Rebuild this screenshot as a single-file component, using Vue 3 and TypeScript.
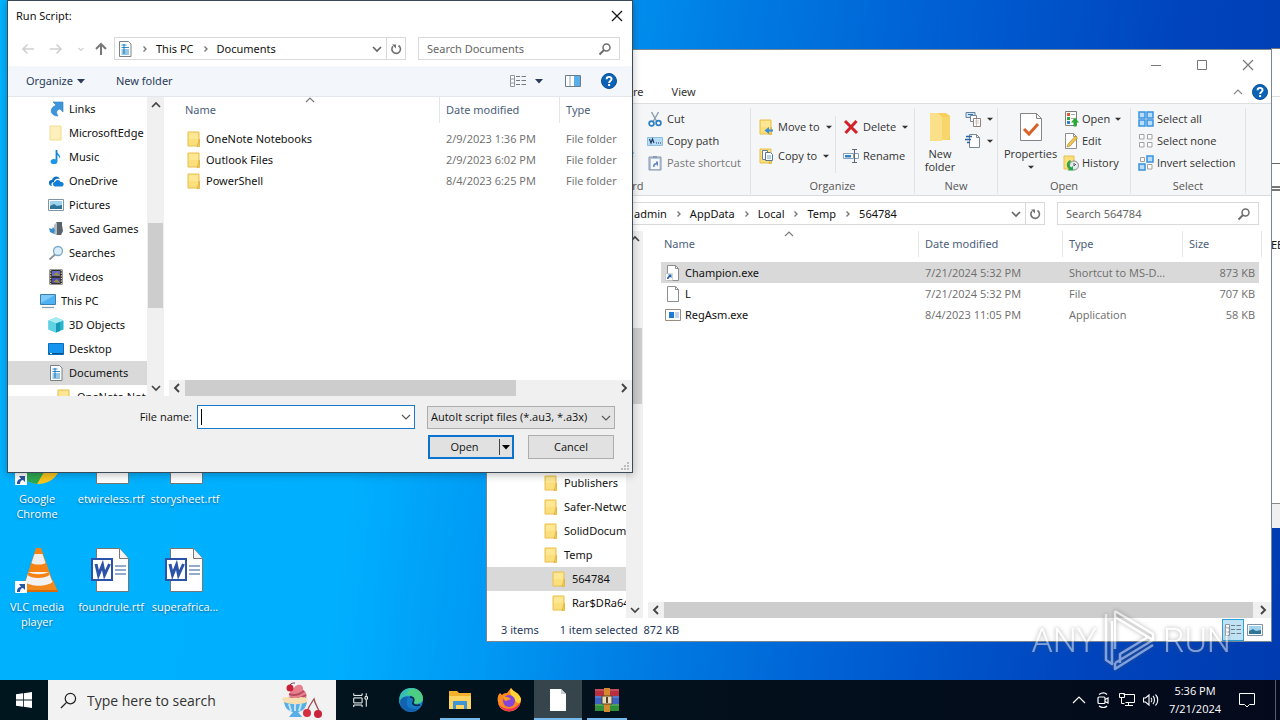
<script setup lang="ts">
import { ref } from 'vue'

interface TreeItem { label: string; icon: string; level?: number; selected?: boolean }
interface FileRow { name: string; icon: string; date: string; type: string; size?: string; selected?: boolean }

const folder = '<path d="M2 1h11v14H2z" fill="#fbdf7c" stroke="#e8bf4c"/><path d="M3 2h9v6H3z" fill="#fde793"/><path d="M13.500 8v7.500H11z" fill="#f5cd57" stroke="#e0b23e" stroke-width=".8"/>'
const help = '<circle cx="8" cy="8" r="7.500" fill="#0b63b8" stroke="#0a4f98"/><path d="M5.600 6.200C5.600 3.200 10.600 3.100 10.600 6 10.600 7.800 8.100 8 8.100 9.900" fill="none" stroke="#fff" stroke-width="1.900"/><path d="M7.100 11h2v2h-2z" fill="#fff"/>'
const page = '<path d="M2.500.5h8l3 3v12h-11z" fill="#fff" stroke="#8e8e8e"/><path d="M10.500.5v3h3" fill="none" stroke="#8e8e8e"/>'
const docs = '<path d="M2.500.5h9l2.500 2.500v12.500H2.500z" fill="#fff" stroke="#7a8288"/><path d="M4.500 4h5M4.500 6.500h7.500M4.500 9h7.500M4.500 11h7.500M4.500 13h7.500" stroke="#2f8fd0" stroke-width="1.200"/><path d="M7 3v10" stroke="#1976b5"/>'

const icons: Record<string, string> = {
  folder,
  help,
  page,
  docs,
  folderPale: '<path d="M2 1h11v14H2z" fill="#fdf0bb" stroke="#f2dc96"/><path d="M13.500 8.500v7H10z" fill="#fae6a2"/>',
  links: '<path d="M5 1h10v10l-3-3c-4 1-4 4-2 7-6 0-9-5-5-9l3-2z" fill="#3d95dc" stroke="#2b7fc4" stroke-width=".6"/>',
  music: '<path d="M8 1c1 4 5 4 4 9-1-3-2-3.500-3-4v6" fill="#1b96ea"/><path d="M8.500 1v11" stroke="#1484d6" stroke-width="1.800"/><ellipse cx="6" cy="12.500" rx="3.400" ry="2.600" fill="#1b96ea"/>',
  onedrive: '<path d="M1 10c0-3 2-3 3-3 1-4 6-5 8-1-5-1-6 2-6 3-3 0-3 3-2 4-2 0-3-1-3-3z" fill="#0b6fc2"/><path d="M5 11c0-2 2-2 2-2 1-3 5-2.500 5.500 0 4-1 4 4.500 1 4.500H7c-1 0-2-1-2-2.500z" fill="#1180d8"/>',
  pictures: '<path d="M.5 2.500h15v11H.5z" fill="#fff" stroke="#7e93a3"/><path d="M2 4h12v8H2z" fill="#9fd2ee"/><path d="M2 9l4-2 3 2 5-1v4H2z" fill="#2f7597"/>',
  games: '<path d="M8 1h6v3l1 6-2 4H8z" fill="#59636b"/><path d="M6 4l3-3v13l-3-1z" fill="#b2bcc2"/><path d="M1 7l3 1 1-2 2 3-1 4-4-2z" fill="#3a8fd4"/>',
  search: '<circle cx="10" cy="6" r="4.500" fill="#d9eefa" stroke="#7ba8c4" stroke-width="1.300"/><path d="M7 9.500L1.500 14.500" stroke="#8b9296" stroke-width="1.800"/>',
  videos: '<path d="M1.500.5h13v15h-13z" fill="#333"/><path d="M4 2h8v5H4z" fill="#6366c4"/><path d="M4 9h8v5H4z" fill="#4b4cae"/><path d="M5 6l4-3 3 4M5 13l4-3 3 4" fill="#9c9140"/><path d="M2.700 1v14M13.300 1v14" stroke="#f3efc0" stroke-dasharray="1.300 1.300"/>',
  pc: '<path d="M.5 1.500h15v10H.5z" fill="#4fb0f2" stroke="#3f7fae"/><path d="M1 2h14L1 10z" fill="#7ecbfb"/><path d="M2 14.500h12" stroke="#8b9aa6" stroke-width="1.200"/>',
  cube: '<path d="M8 .5l7.500 3v9L8 15.500.5 12.500v-9z" fill="#28b6cf"/><path d="M8 .5l7.500 3L8 6.500.5 3.500z" fill="#a5ecf4"/><path d="M8 6.500v9L.5 12.500v-9z" fill="#5fd3e4"/><path d="M8 6.500l4-1.500v9l-4 1.500z" fill="#169ab4"/>',
  desktop: '<path d="M.5 2.500h15v11H.5z" fill="#1595f0" stroke="#0d6cb8"/><path d="M1 12.500h14" stroke="#0c4f8d"/><path d="M2 12.500h2" stroke="#fff"/>',
  shortcut: page + '<path d="M.5 8.500h7v7h-7z" fill="#fff" stroke="#bbb" stroke-width=".6"/><path d="M2 14c0-2 1-3 2-3l-1-1.500h3.500V13L5.300 12C4 12.500 4 13 3.500 14z" fill="#2660b0"/>',
  app: '<path d="M.5 2.500h15v11H.5z" fill="#fff" stroke="#9c8c80"/><path d="M4 5h5v6H4z" fill="#1d7cd0"/><path d="M10 6h4M10 8h4M10 10h4" stroke="#84aed4"/>',
  cut: '<path d="M4.500 1l5 9M11.500 1l-5 9" stroke="#8fa0ae" stroke-width="1.500"/><circle cx="4.500" cy="12.500" r="2.400" fill="none" stroke="#2d7fc1" stroke-width="1.700"/><circle cx="11.500" cy="12" r="2.400" fill="none" stroke="#2d7fc1" stroke-width="1.700"/>',
  copypath: '<path d="M.5 4.500h15v8H.5z" fill="#b6dcf8" stroke="#8bbfe5"/><path d="M2.500 6l1.500 4 1.500-4 1.500 4M9 10h1M11 10h1M13 10h1" fill="none" stroke="#233c63" stroke-width="1.200"/>',
  pasteshort: '<path d="M2 2h12v13H2z" fill="#b8c6da" stroke="#8496b4"/><path d="M4 4h8.500v10H4z" fill="#f4f7fb"/><path d="M6 1h4v2H6z" fill="#8b9ab0"/><path d="M6 12c0-3 1-4 3-4V6.500h-2 4v5l-1.500-2C8 9.500 7.500 11 7.500 12z" fill="#6586bd"/>',
  moveto: folder + '<path d="M15 10.500h-4V8L6.500 11.500 11 15v-2.500h4z" fill="#3a8fd6"/>',
  copyto: folder + '<path d="M4.500 2.500h5v9h-5z" fill="#fff" stroke="#6b8299"/><path d="M7.500 4.500h5l2 2v6h-7z" fill="#fff" stroke="#5b7890"/><path d="M9 8h4M9 10h4" stroke="#6fa6d8"/>',
  delete: '<path d="M2 2l12 12M13.500 2L2.500 14" stroke="#d3222a" stroke-width="3"/>',
  rename: '<path d="M.5 5.500h10v5H.5zM11 5.500h4.500v5H11" fill="#fff" stroke="#8aa1b5"/><path d="M2 7h6v2.500H2z" fill="#2d80cb"/><path d="M9 1.500h5M11.500 1.500v13M9 14.500h5" stroke="#5c6a78" fill="none"/>',
  newitem: '<path d="M1 1.500h9v5H1z" fill="#cfe4f6" stroke="#64839e"/><path d="M3 3.500h5" stroke="#2c74b4"/><path d="M5.500 4.500h6v6h-6z" fill="#fff" stroke="#7a8794"/><path d="M8.500 7.500h7v8h-7z" fill="#fff" stroke="#8f8280"/><path d="M10 10h4M10 12h4M11.500 8v7" stroke="#c8b9b4" stroke-width=".8"/>',
  easy: '<path d="M4.500 1.500h7l3 3v10h-10z" fill="#fff" stroke="#7a8794"/><path d="M11.500 1.500v3h3" fill="none" stroke="#7a8794"/><path d="M1 3.500h6M0 6.500h6M2 9.500h3" stroke="#2c62a6" stroke-width="1.300"/>',
  open: '<path d="M2.500.5h11v14h-11z" fill="#fff" stroke="#7d7d7d"/><path d="M4 2h3v3H4z" fill="#dd5a30"/><path d="M4 6h3v3H4z" fill="#35a03c"/><path d="M4 10h3v3H4z" fill="#2f82cd"/><path d="M8 3.500h4M8 7.500h3" stroke="#aaa"/><path d="M12 6.500l4 5h-2.500v4h-3v-4H8z" fill="#27ab35"/>',
  edit: page + '<path d="M4 14l1-3 7.500-8 2 2L7 13z" fill="#f2c552" stroke="#a67f2a" stroke-width=".6"/>',
  history: '<path d="M1 1h10v13H1z" fill="#fbdf7c" stroke="#e8bf4c"/><circle cx="11" cy="10.500" r="4.500" fill="#e7eaec" stroke="#838b90"/><path d="M11 8v3l2-2" fill="none" stroke="#555"/><path d="M7 5C3 7 3 12 6 14l-1.500 1.500H10V11l-2 1.500C6 11 6 8 8 6z" fill="#28a545"/>',
  selall: '<path d="M1 1h6v6H1zM9 1h6v6H9zM1 9h6v6H1zM9 9h6v6H9z" fill="#b9defa" stroke="#3793df" stroke-width="1.500"/>',
  selnone: '<path d="M1.500 1.500h4.500v4.500H1.500zM9.500 1.500h4.500v4.500H9.500zM1.500 9.500h4.500v4.500H1.500zM9.500 9.500h4.500v4.500H9.500z" fill="#fff" stroke="#a2a2a2"/>',
  selinv: '<path d="M2.500 2.500h4v4h-4zM9.500 9.500h4.500v4.500H9.500z" fill="#fff" stroke="#a2a2a2"/><path d="M9 1h6v6H9zM1 9h6v6H1z" fill="#b9defa" stroke="#3793df" stroke-width="1.500"/>',
  viewlist: '<path d="M.5 2.500h4v11h-4zM.5 6h4M.5 10h4" fill="#fff" stroke="#8f979e"/><path d="M6 3.500h4M11.500 3.500H16M6 7.500h4M11.500 7.500H16M6 11.500h4M11.500 11.500H16" stroke="#707a83"/>',
  pane: '<path d="M.5 2.500h15v11H.5z" fill="#fff" stroke="#6b7d8d"/><path d="M9 3h6v10H9z" fill="#5aaeea"/><path d="M5 3v10" stroke="#9aa7b1"/>',
  left: '<path d="M14 8H3M7.500 3.500L3 8l4.500 4.500" fill="none" stroke="currentColor" stroke-width="1.600"/>',
  right: '<path d="M2 8h11M8.500 3.500L13 8l-4.500 4.500" fill="none" stroke="currentColor" stroke-width="1.600"/>',
  up: '<path d="M8 14V3M3 8l5-5 5 5" fill="none" stroke="currentColor" stroke-width="2"/>',
  chevD: '<path d="M4 6l4 4 4-4" fill="none" stroke="currentColor" stroke-width="1.700"/>',
  chevU: '<path d="M4 10l4-4 4 4" fill="none" stroke="currentColor" stroke-width="1.700"/>',
  chevL: '<path d="M10 4L6 8l4 4" fill="none" stroke="currentColor" stroke-width="1.900"/>',
  chevR: '<path d="M6 4l4 4-4 4" fill="none" stroke="currentColor" stroke-width="1.900"/>',
  crumb: '<path d="M6.500 5.500L9 8l-2.500 2.500" fill="none" stroke="#777" stroke-width="1.400"/>',
  thinU: '<path d="M4 10l4-4 4 4" fill="none" stroke="currentColor" stroke-width="1.100"/>',
  thinD: '<path d="M4 6l4 4 4-4" fill="none" stroke="currentColor" stroke-width="1.100"/>',
  tinyD: '<path d="M5.500 7L8 9.500 10.500 7" fill="none" stroke="currentColor" stroke-width="1.100"/>',
  caret: '<path d="M4 6h8l-4 4.500z" fill="currentColor"/>',
  caretS: '<path d="M4.500 6.500h7L8 10z" fill="currentColor"/>',
  refresh: '<path d="M10.500 4.500A4.300 4.300 0 1 1 5 5.200" fill="none" stroke="#707070" stroke-width="1.600"/><path d="M4 3.500h4v4z" fill="#707070"/>',
  glass: '<circle cx="9.500" cy="6.500" r="3.500" fill="none" stroke="#6d6d6d" stroke-width="1.500"/><path d="M7 9l-4.500 4.500" stroke="#6d6d6d" stroke-width="2"/>',
  close: '<path d="M3 3l10 10M13 3L3 13" stroke="currentColor" stroke-width="1.200"/>',
  min: '<path d="M3 8.500h10" stroke="currentColor"/>',
  max: '<path d="M3.500 3.500h9v9h-9z" fill="none" stroke="currentColor"/>',
  grip: '<path d="M12 6h2v2h-2zM9 9h2v2H9zM12 9h2v2h-2zM6 12h2v2H6zM9 12h2v2H9zM12 12h2v2h-2z" fill="#bdbdbd"/>',
}

const dialogTree: TreeItem[] = [
  { label: 'Links', icon: 'links' },
  { label: 'MicrosoftEdge', icon: 'folderPale' },
  { label: 'Music', icon: 'music' },
  { label: 'OneDrive', icon: 'onedrive' },
  { label: 'Pictures', icon: 'pictures' },
  { label: 'Saved Games', icon: 'games' },
  { label: 'Searches', icon: 'search' },
  { label: 'Videos', icon: 'videos' },
  { label: 'This PC', icon: 'pc', level: 0 },
  { label: '3D Objects', icon: 'cube' },
  { label: 'Desktop', icon: 'desktop' },
  { label: 'Documents', icon: 'docs', selected: true },
  { label: 'OneNote Notebooks', icon: 'folder', level: 2 },
]
const explorerTree: TreeItem[] = [
  { label: 'Publishers', icon: 'folder' },
  { label: 'Safer-Networking', icon: 'folder' },
  { label: 'SolidDocuments', icon: 'folder' },
  { label: 'Temp', icon: 'folder' },
  { label: '564784', icon: 'folder', level: 2, selected: true },
  { label: 'Rar$DRa6432', icon: 'folder', level: 2 },
]
const dialogFiles: FileRow[] = [
  { name: 'OneNote Notebooks', icon: 'folder', date: '2/9/2023 1:36 PM', type: 'File folder' },
  { name: 'Outlook Files', icon: 'folder', date: '2/9/2023 6:02 PM', type: 'File folder' },
  { name: 'PowerShell', icon: 'folder', date: '8/4/2023 6:25 PM', type: 'File folder' },
]
const explorerFiles: FileRow[] = [
  { name: 'Champion.exe', icon: 'shortcut', date: '7/21/2024 5:32 PM', type: 'Shortcut to MS-D...', size: '873 KB', selected: true },
  { name: 'L', icon: 'page', date: '7/21/2024 5:32 PM', type: 'File', size: '707 KB' },
  { name: 'RegAsm.exe', icon: 'app', date: '8/4/2023 11:05 PM', type: 'Application', size: '58 KB' },
]
const crumbs = ['admin', 'AppData', 'Local', 'Temp', '564784']
const fileName = ref('')
</script>

<template>
  <main class="screen">
    <section class="desktop">
      <div class="shortcuts">
        <a href="#" class="shortcut">
          <svg viewBox="0 0 48 48">
            <circle cx="26" cy="23" r="22" fill="#f9c51d" />
            <path d="M26 23L7 12a22 22 0 0 0 17 33l10-17z" fill="#2da94f" />
            <path d="M26 23L7 12a22 22 0 0 1 38 0z" fill="#e33b2e" />
            <circle cx="26" cy="23" r="10" fill="#fff" /><circle cx="26" cy="23" r="8" fill="#3b7ded" />
            <path d="M2 34h12v12H2z" fill="#fff" /><path d="M4 45c0-4 2-5 4-5l-2-3h6v6l-2-2c-2 0-3 2-3 4z" fill="#2a57a3" />
          </svg>
          <span>Google<br>Chrome</span>
        </a>
        <a v-for="n in ['etwireless.rtf', 'storysheet.rtf']" :key="n" href="#" class="shortcut">
          <svg viewBox="0 0 48 48">
            <path d="M9.500 1.500h23l9 10v33h-32z" fill="#fff" stroke="#777" /><path d="M32.500 1.500v10h9" fill="#f4f4f4" stroke="#777" />
            <path d="M28 19h11M28 23h11M28 27h11" stroke="#2b5797" /><path d="M5 12h20v21H5z" fill="#fff" stroke="#2a52a8" stroke-width="2" />
            <path d="M9 17l2.500 11 4-10 2 10 5-11" fill="none" stroke="#2a52a8" stroke-width="3" />
          </svg>
          <span>{{ n }}</span>
        </a>
        <a href="#" class="shortcut">
          <svg viewBox="0 0 48 48">
            <path d="M12 33h28l5 12H9z" fill="#f08a1c" /><path d="M9 43h36v2H9z" fill="#d96a08" />
            <path d="M23 1h5l12 34c-6 6-23 6-28 0z" fill="#f58212" />
            <path d="M21.500 7h8l3 9c-3 2-11 2-14 0z" fill="#eee" /><path d="M15.500 25h20l4 10c-6 5-22 5-27 0z" fill="#f2f2f2" />
            <path d="M15.500 25c5 3 15 3 20 0l1 3c-5 4-18 4-22 0z" fill="#f58212" />
            <path d="M2 34h12v12H2z" fill="#fff" /><path d="M4 45c0-4 2-5 4-5l-2-3h6v6l-2-2c-2 0-3 2-3 4z" fill="#2a57a3" />
          </svg>
          <span>VLC media<br>player</span>
        </a>
        <a v-for="n in ['foundrule.rtf', 'superafrica...']" :key="n" href="#" class="shortcut">
          <svg viewBox="0 0 48 48">
            <path d="M9.500 1.500h23l9 10v33h-32z" fill="#fff" stroke="#777" /><path d="M32.500 1.500v10h9" fill="#f4f4f4" stroke="#777" />
            <path d="M28 19h11M28 23h11M28 27h11" stroke="#2b5797" /><path d="M5 12h20v21H5z" fill="#fff" stroke="#2a52a8" stroke-width="2" />
            <path d="M9 17l2.500 11 4-10 2 10 5-11" fill="none" stroke="#2a52a8" stroke-width="3" />
          </svg>
          <span>{{ n }}</span>
        </a>
      </div>

      <aside class="behind">
        <div class="b1"></div><div class="b2"></div><div class="b3"></div>
        <div class="b4">EB</div>
        <div class="b5"></div>
      </aside>

      <article class="explorer">
        <header class="captions">
          <button aria-label="Minimize"><svg viewBox="0 0 16 16" v-html="icons.min" /></button>
          <button aria-label="Maximize"><svg viewBox="0 0 16 16" v-html="icons.max" /></button>
          <button aria-label="Close"><svg viewBox="0 0 16 16" v-html="icons.close" /></button>
        </header>
        <nav class="tabs">
          <button>Share</button>
          <button>View</button>
          <span class="fill"></span>
          <button class="collapse" aria-label="Collapse ribbon"><svg viewBox="0 0 16 16" v-html="icons.thinU" /></button>
          <button class="helpbtn" aria-label="Help"><svg viewBox="0 0 16 16" v-html="icons.help" /></button>
        </nav>
        <div class="ribbon">
          <div class="group clip">
            <div class="cmds">
              <button class="big">Paste</button>
              <div class="col">
                <button class="cmd"><svg viewBox="0 0 16 16" v-html="icons.cut" />Cut</button>
                <button class="cmd"><svg viewBox="0 0 16 16" v-html="icons.copypath" />Copy path</button>
                <button class="cmd dim"><svg viewBox="0 0 16 16" v-html="icons.pasteshort" />Paste shortcut</button>
              </div>
            </div>
            <p>Clipboard</p>
          </div>
          <div class="group org">
            <div class="cmds">
              <div class="col wide">
                <button class="cmd"><svg viewBox="0 0 16 16" v-html="icons.moveto" />Move to<svg class="car" viewBox="0 0 16 16" v-html="icons.caretS" /></button>
                <button class="cmd"><svg viewBox="0 0 16 16" v-html="icons.copyto" />Copy to<svg class="car" viewBox="0 0 16 16" v-html="icons.caretS" /></button>
              </div>
              <div class="col wide second">
                <button class="cmd"><svg viewBox="0 0 16 16" v-html="icons.delete" />Delete<svg class="car" viewBox="0 0 16 16" v-html="icons.caretS" /></button>
                <button class="cmd"><svg viewBox="0 0 16 16" v-html="icons.rename" />Rename</button>
              </div>
            </div>
            <p>Organize</p>
          </div>
          <div class="group new">
            <div class="cmds">
              <button class="big">
                <svg viewBox="0 0 32 32"><path d="M6 2h16l4 3v24H6z" fill="#f6cf5c" /><path d="M6 2h8l4 4v24H6z" fill="#fbe08a" /><path d="M18 6h8v20l-3 3h-5z" fill="#f8d66c" /></svg>
                New<br>folder
              </button>
              <div class="col">
                <button class="cmd" aria-label="New item"><svg viewBox="0 0 16 16" v-html="icons.newitem" /><svg class="car" viewBox="0 0 16 16" v-html="icons.caretS" /></button>
                <button class="cmd" aria-label="Easy access"><svg viewBox="0 0 16 16" v-html="icons.easy" /><svg class="car" viewBox="0 0 16 16" v-html="icons.caretS" /></button>
              </div>
            </div>
            <p>New</p>
          </div>
          <div class="group opn">
            <div class="cmds">
              <button class="big">
                <svg viewBox="0 0 32 32"><path d="M5.500 2.500h16l5 5v22h-21z" fill="#fff" stroke="#858585" /><path d="M21.500 2.500v5h5" fill="none" stroke="#858585" /><path d="M9 18l5 5 9-10" fill="none" stroke="#d9622b" stroke-width="3" /></svg>
                Properties
                <svg class="car" viewBox="0 0 16 16" v-html="icons.caretS" />
              </button>
              <div class="col">
                <button class="cmd"><svg viewBox="0 0 16 16" v-html="icons.open" />Open<svg class="car" viewBox="0 0 16 16" v-html="icons.caretS" /></button>
                <button class="cmd"><svg viewBox="0 0 16 16" v-html="icons.edit" />Edit</button>
                <button class="cmd"><svg viewBox="0 0 16 16" v-html="icons.history" />History</button>
              </div>
            </div>
            <p>Open</p>
          </div>
          <div class="group sel">
            <div class="cmds">
              <div class="col">
                <button class="cmd"><svg viewBox="0 0 16 16" v-html="icons.selall" />Select all</button>
                <button class="cmd"><svg viewBox="0 0 16 16" v-html="icons.selnone" />Select none</button>
                <button class="cmd"><svg viewBox="0 0 16 16" v-html="icons.selinv" />Invert selection</button>
              </div>
            </div>
            <p>Select</p>
          </div>
        </div>
        <div class="address">
          <div class="path">
            <template v-for="(c, i) in crumbs" :key="c">
              <svg v-if="i" class="crumb" viewBox="0 0 16 16" v-html="icons.crumb" />
              <a href="#">{{ c }}</a>
            </template>
            <span class="fill"></span>
            <button aria-label="Previous locations"><svg viewBox="0 0 16 16" v-html="icons.chevD" /></button>
            <button class="reload" aria-label="Refresh"><svg viewBox="0 0 16 16" v-html="icons.refresh" /></button>
          </div>
          <label class="find"><input type="text" placeholder="Search 564784" aria-label="Search 564784"><svg viewBox="0 0 16 16" v-html="icons.glass" /></label>
        </div>
        <div class="panes">
          <ul class="tree end">
            <li v-for="t in explorerTree" :key="t.label" :class="{ selected: t.selected, deep: t.level === 2 }">
              <svg viewBox="0 0 16 16" v-html="icons[t.icon]" />{{ t.label }}
            </li>
          </ul>
          <div class="vbar">
            <svg viewBox="0 0 16 16" v-html="icons.chevU" />
            <div class="before"></div><div class="thumb"></div><div class="fill"></div>
            <svg viewBox="0 0 16 16" v-html="icons.chevD" />
          </div>
          <div class="list">
            <svg class="sort" viewBox="0 0 16 16" v-html="icons.thinU" />
            <table>
              <thead><tr><th class="cn"><div>Name</div></th><th class="cd"><div>Date modified</div></th><th class="ct"><div>Type</div></th><th class="cs"><div>Size</div></th></tr></thead>
              <tbody>
                <tr v-for="f in explorerFiles" :key="f.name" :class="{ selected: f.selected }">
                  <td class="name"><svg viewBox="0 0 16 16" v-html="icons[f.icon]" />{{ f.name }}</td>
                  <td>{{ f.date }}</td><td>{{ f.type }}</td><td class="num">{{ f.size }}</td>
                </tr>
              </tbody>
            </table>
            <div class="hbar">
              <svg viewBox="0 0 16 16" v-html="icons.chevL" /><div class="thumb"></div><svg viewBox="0 0 16 16" v-html="icons.chevR" />
            </div>
          </div>
        </div>
        <footer class="status">
          <span class="count">3 items</span><span>1 item selected&nbsp; 872 KB</span><span class="fill"></span>
          <button class="on" aria-label="Details view"><svg viewBox="0 0 16 16" v-html="icons.viewlist" /></button>
          <button aria-label="Thumbnail view"><svg viewBox="0 0 16 16" v-html="icons.pictures" /></button>
        </footer>
      </article>

      <form class="dialog" @submit.prevent>
        <header class="title"><h1>Run Script:</h1><button type="button" aria-label="Close"><svg viewBox="0 0 16 16" v-html="icons.close" /></button></header>
        <div class="address">
          <button type="button" class="nav off" aria-label="Back"><svg viewBox="0 0 16 16" v-html="icons.left" /></button>
          <button type="button" class="nav off" aria-label="Forward"><svg viewBox="0 0 16 16" v-html="icons.right" /></button>
          <button type="button" class="nav off recent" aria-label="Recent"><svg viewBox="0 0 16 16" v-html="icons.tinyD" /></button>
          <button type="button" class="nav upb" aria-label="Up"><svg viewBox="0 0 16 16" v-html="icons.up" /></button>
          <div class="path">
            <svg class="docicon" viewBox="0 0 16 16" v-html="icons.docs" />
            <svg class="crumb" viewBox="0 0 16 16" v-html="icons.crumb" /><a href="#">This PC</a>
            <svg class="crumb" viewBox="0 0 16 16" v-html="icons.crumb" /><a href="#">Documents</a>
            <span class="fill"></span>
            <button type="button" aria-label="Previous locations"><svg viewBox="0 0 16 16" v-html="icons.chevD" /></button>
            <button type="button" class="reload" aria-label="Refresh"><svg viewBox="0 0 16 16" v-html="icons.refresh" /></button>
          </div>
          <label class="find"><input type="text" placeholder="Search Documents" aria-label="Search Documents"><svg viewBox="0 0 16 16" v-html="icons.glass" /></label>
        </div>
        <div class="tools">
          <button type="button">Organize<svg viewBox="0 0 16 16" v-html="icons.caret" /></button>
          <button type="button">New folder</button>
          <span class="fill"></span>
          <button type="button" aria-label="Change view"><svg viewBox="0 0 16 16" v-html="icons.viewlist" /></button>
          <button type="button" class="drop" aria-label="View options"><svg viewBox="0 0 16 16" v-html="icons.caret" /></button>
          <button type="button" class="prev" aria-label="Preview pane"><svg viewBox="0 0 16 16" v-html="icons.pane" /></button>
          <button type="button" aria-label="Help"><svg viewBox="0 0 16 16" v-html="icons.help" /></button>
        </div>
        <div class="panes">
          <ul class="tree">
            <li v-for="t in dialogTree" :key="t.label" :class="{ selected: t.selected, deep: t.level === 2, root: t.level === 0 }">
              <svg viewBox="0 0 16 16" v-html="icons[t.icon]" />{{ t.label }}
            </li>
          </ul>
          <div class="vbar">
            <svg viewBox="0 0 16 16" v-html="icons.chevU" />
            <div class="before"></div><div class="thumb"></div><div class="fill"></div>
            <svg viewBox="0 0 16 16" v-html="icons.chevD" />
          </div>
          <div class="list">
            <svg class="sort" viewBox="0 0 16 16" v-html="icons.thinU" />
            <table>
              <thead><tr><th class="cn"><div>Name</div></th><th class="cd"><div>Date modified</div></th><th class="ct"><div>Type</div></th></tr></thead>
              <tbody>
                <tr v-for="f in dialogFiles" :key="f.name">
                  <td class="name"><svg viewBox="0 0 16 16" v-html="icons[f.icon]" />{{ f.name }}</td>
                  <td>{{ f.date }}</td><td>{{ f.type }}</td>
                </tr>
              </tbody>
            </table>
            <div class="hbar">
              <svg viewBox="0 0 16 16" v-html="icons.chevL" /><div class="thumb"></div><span class="fill"></span><svg viewBox="0 0 16 16" v-html="icons.chevR" />
            </div>
          </div>
        </div>
        <div class="choose">
          <div class="row">
            <label for="fname">File name:</label>
            <div class="combo"><span class="beam"></span><input id="fname" v-model="fileName" type="text"><svg viewBox="0 0 16 16" v-html="icons.thinD" /></div>
            <div class="filter"><select aria-label="File type"><option>AutoIt script files (*.au3, *.a3x)</option></select><svg viewBox="0 0 16 16" v-html="icons.thinD" /></div>
          </div>
          <div class="row actions">
            <div class="split"><button type="submit">Open</button><button type="button" class="more" aria-label="Open options"><svg viewBox="0 0 16 16" v-html="icons.caret" /></button></div>
            <button type="button" class="cancel">Cancel</button>
          </div>
        </div>
        <svg class="grip" viewBox="0 0 16 16" v-html="icons.grip" />
      </form>

      <div class="mark">
        <span>ANY</span>
        <svg viewBox="0 0 56 64"><path d="M4 6v46l6 4V13M13 3v38M13 3l38 23v6L13 9M13 55l38-23-5-3-28 17v9M13 55v6l38-24" fill="none" stroke="#fff" stroke-width="2.500" stroke-linejoin="round" /></svg>
        <span>RUN</span>
      </div>
    </section>

    <footer class="taskbar">
      <button class="start" aria-label="Start"><svg viewBox="0 0 16 16"><path d="M0 2.300l7-1v6.300H0zM7.800 1.200L16 0v7.600H7.800zM0 8.400h7v6.300l-7-1zM7.800 8.400H16V16l-8.200-1.200z" fill="#fff" /></svg></button>
      <label class="search">
        <svg class="lens" viewBox="0 0 18 18"><circle cx="11" cy="7" r="5.500" fill="none" stroke="#222" stroke-width="1.300" /><path d="M7 11L1 17" stroke="#222" stroke-width="1.400" /></svg>
        <input type="text" placeholder="Type here to search" aria-label="Type here to search">
        <svg class="sundae" viewBox="0 0 44 36">
          <path d="M10 17c-2-6 1-9 4-11 3-5 10-4 9 2 4 2 4 6 3 9z" fill="#e77f8c" /><path d="M9 12c5 2 10 1 15-3M8 16c7 2 12 1 18-3" fill="none" stroke="#b84b61" stroke-width="2" />
          <circle cx="10" cy="6" r="3.500" fill="#c9203a" /><path d="M10 3c1-2 3-2 5-2" fill="none" stroke="#74404a" />
          <path d="M2 17c2-3 5-1 7-2 3 2 6 0 9 1 3-2 6-1 10 1l-2 5H5z" fill="#f6dfb0" />
          <path d="M4 20c7 3 17 3 23 0-1 6-4 9-9 10l4 5H9l4-5c-5-1-8-4-9-10z" fill="#58aee5" /><path d="M9 22l2 7M15 22v7M21 22l-2 7" stroke="#bfe4f9" stroke-width="2" />
          <path d="M27 29c2-5 5-9 7-12 1 5 4 9 5 12" fill="none" stroke="#a2474e" stroke-width="1.300" /><circle cx="27" cy="31" r="4" fill="#d52f42" /><circle cx="38" cy="32" r="4" fill="#c92439" />
        </svg>
      </label>
      <div class="apps">
        <button aria-label="Task View"><svg viewBox="0 0 24 24" fill="none" stroke="#fff" stroke-width="1.200"><path d="M4.500 4v2.500h10V4M4.500 9.500h10v6h-10zM4.500 20.500V18h10v2.500M19.500 4v3M19.500 12v8" /><path d="M18 8h3v3h-3z" /></svg></button>
        <button aria-label="Edge"><svg viewBox="0 0 24 24"><circle cx="12" cy="12" r="12" fill="#1579c9" /><path d="M.5 10C2-3 22-4 24 10c0 6-6 7-10 5 3-3 1-7-3-7-5 0-8 3-10.500 8z" fill="#35c1b1" /><path d="M11 1c7-1 13 4 13 9 0 5-5 6-9 5 2-7-3-9-8-8z" fill="#58d36e" opacity=".7" /><path d="M8 12c-2 7 4 11 12 8-5 6-18 5-19-7 2-5 7-5 9-4-1 0-2 1-2 3z" fill="#1362b0" /><path d="M11 9c5 0 4 4 3 5-1 3 3 4 7 3" fill="none" stroke="#00263a" stroke-width="1.500" /></svg></button>
        <button class="run" aria-label="File Explorer"><svg viewBox="0 0 24 24"><path d="M1 3h8l2 2h12v16H1z" fill="#f2b12c" /><path d="M1 8h22v13H1z" fill="#fcd45f" /><path d="M5 13h14v8h-3v-4H8v4H5z" fill="#3f94d4" /></svg></button>
        <button aria-label="Firefox"><svg viewBox="0 0 24 24"><path d="M3 5l2 2c2-2 4-2 5-2l4-5c2 4 8 4 10 11 0 16-22 16-23 3C0 10 1 7 3 5z" fill="#ff8a1f" /><path d="M14 0c2 4 8 4 10 11-1 7-5 4-7-1-3-2-5-5-3-10z" fill="#ffd43b" /><path d="M1 14c2 12 20 12 22 1-6 8-17 7-22 1z" fill="#ef2f5b" /><circle cx="12" cy="13" r="6" fill="#8745d8" /><path d="M6 9c4-1 6 1 8 2-3 1-4 2-6 2z" fill="#ff9d22" /></svg></button>
        <button class="active" aria-label="Run Script"><svg viewBox="0 0 24 24"><path d="M4 1h11l5 5v17H4z" fill="#fff" /><path d="M15 1v5h5z" fill="#c9ced1" /></svg></button>
        <button class="run" aria-label="WinRAR"><svg viewBox="0 0 24 24"><path d="M0 1h24v7H0z" fill="#b8303f" /><path d="M0 8h24v8H0z" fill="#3b62c4" /><path d="M0 16h24v7H0z" fill="#2f8f3b" /><path d="M0 2h24M0 9h24M0 17h24" stroke="#fff" stroke-opacity=".3" /><path d="M9 0h6v24H9z" fill="#d38a2e" /><path d="M7 8h10v8H7z" fill="#e7dcc0" stroke="#5a4220" /><path d="M12 9v6" stroke="#5a4220" stroke-width="2" /></svg></button>
      </div>
      <span class="fill"></span>
      <div class="tray">
        <button aria-label="Hidden icons"><svg viewBox="0 0 16 16" fill="none" stroke="#fff" stroke-width="1.200"><path d="M2 11l6-6 6 6" /></svg></button>
        <button aria-label="Meet now"><svg viewBox="0 0 16 16" fill="none" stroke="#fff" stroke-width="1.200"><rect x="3" y="5" width="7" height="6.500" rx="1" /><path d="M10 7.500l3-1.500v5l-3-1.500M4 2.500c3-2 6-2 8 0M4 14c3 2 6 2 8 0" /></svg></button>
        <button aria-label="Network"><svg viewBox="0 0 16 16" fill="none" stroke="#fff"><path d="M4.500 2.500h11v8h-9M9.500 10.500v3M6 13.500h8M.5 1.500h5v4h-5zM2.500 5.500v6h3" /></svg></button>
        <button aria-label="Volume"><svg viewBox="0 0 16 16" fill="none" stroke="#fff" stroke-width="1.100"><path d="M.5 6v4h2L6 13V3L2.500 6zM8 6c1 1 1 3 0 4M10 4c2 2 2 6 0 8M12.500 2.500c3 3 3 8 0 11" /></svg></button>
        <time>5:36 PM<br>7/21/2024</time>
        <button class="notes" aria-label="Notifications"><svg viewBox="0 0 16 16" fill="none" stroke="#fff"><path d="M.5 1.500h15v11h-5L8 15l-2.500-2.500h-5z" /></svg></button>
        <span class="peek"></span>
      </div>
    </footer>
  </main>
</template>

<style>
html, body { margin: 0; height: 100%; overflow: hidden; }
</style>

<style scoped>
* { box-sizing: border-box; }
.screen { display: flex; flex-direction: column; height: 100vh; font: 11px/16px "Noto Sans", "Open Sans", sans-serif; color: #111; }
button { font: inherit; color: inherit; background: none; border: 0; padding: 0; display: flex; align-items: center; white-space: nowrap; }
input { font: inherit; color: inherit; border: 0; background: none; padding: 0; min-width: 0; outline: 0; }
a { color: inherit; text-decoration: none; }
ul, p, h1 { margin: 0; padding: 0; font: inherit; }
svg { width: 16px; height: 16px; flex: none; display: block; }
.fill { flex: 1; }
.desktop { position: relative; flex: 1; min-height: 0; overflow: hidden; background: linear-gradient(98deg, #00b2fd 0%, #00b0ff 30%, #0096f2 43%, #007fe4 52%, #0060d4 68%, #0044bd 86%, #003bb0 100%); }

.shortcuts { position: absolute; left: 0; top: 439px; display: grid; grid-template-columns: repeat(3, 74px); row-gap: 10px; }
.shortcut { display: flex; flex-direction: column; align-items: center; height: 98px; gap: 4px; color: #fff; text-align: center; line-height: 15px; white-space: nowrap; text-shadow: 0 1px 2px #045a8c; font-family: "Open Sans", sans-serif; }
.shortcut svg { width: 48px; height: 48px; }

.behind { position: absolute; left: calc(100% - 9px); right: 0; top: 48px; height: 480px; background: #fff; border-top: 1px solid #777; display: flex; flex-direction: column; }
.b1 { height: 48px; border-bottom: 1px solid #ddd; }
.b2 { height: 67px; border-bottom: 1px solid #666; }
.b3 { height: 27px; border-bottom: 5px double #777; }
.b4 { flex: 1; padding-top: 46px; }
.b5 { height: 25px; background: #f0f0f0; border-top: 1px solid #888; }

.explorer { position: absolute; left: 486px; right: 8px; top: 49px; height: 593px; background: #fff; border: 1px solid #7a8790; display: flex; flex-direction: column; }
.captions { height: 30px; display: flex; justify-content: flex-end; color: #777; }
.captions button { width: 46px; justify-content: center; }
.tabs { height: 24px; display: flex; align-items: center; padding: 0 3px 0 127px; border-bottom: 1px solid #dcdee0; color: #333; }
.tabs button { margin-right: 28px; }
.tabs .collapse, .tabs .helpbtn { margin: 0 0 0 6px; color: #888; }
.ribbon { height: 92px; background: #f5f6f7; border-bottom: 1px solid #d9dbdd; display: flex; padding: 4px 0 1px; color: #333; font-family: "Open Sans", sans-serif; }
.group { border-right: 1px solid #e0e2e4; display: flex; flex-direction: column; }
.group p { text-align: center; line-height: 16px; color: #555; }
.cmds { flex: 1; display: flex; }
.col { display: flex; flex-direction: column; }
.cmd { height: 22px; gap: 4px; }
.cmd .car { margin: 0 -2px; }
.car { width: 14px; height: 14px; }
.wide { gap: 7px; }
.dim { color: #777; }
.big { flex-direction: column; align-self: flex-start; line-height: 13px; white-space: normal; text-align: center; padding-top: 3px; }
.big svg { width: 32px; height: 32px; margin-bottom: 4px; }
.big .car { width: 14px; height: 14px; margin: 0; }
.clip { width: 264px; }
.clip .cmds { justify-content: flex-end; }
.clip .big { padding: 38px 13px 0 0; }
.clip .col { width: 103px; }
.org { width: 164px; }
.org .cmds { padding-left: 7px; }
.org .wide { width: 78px; border-right: 1px solid #e0e2e4; margin: 8px 0 5px; }
.org .second { border: 0; width: auto; padding-left: 7px; }
.new { width: 83px; }
.new .big { width: 50px; }
.opn { width: 133px; }
.opn .big { width: 65px; }
.opn .cmd { gap: 3px; }
.sel { width: 115px; padding-left: 7px; }
.sel p { padding-right: 7px; }
.sel .cmd { gap: 3px; }

.address { display: flex; align-items: center; }
.explorer .address { padding: 6px 12px 6px 100px; height: 35px; }
.path { flex: 1; height: 23px; border: 1px solid #d9d9d9; display: flex; align-items: center; min-width: 0; }
.explorer .path { padding-left: 46px; }
.crumb { margin: 0 3px 0 4px; }
.path button { height: 21px; color: #666; }
.path .reload { border-left: 1px solid #d9d9d9; margin-left: 1px; padding: 0 1px; }
.find { flex: none; width: 202px; height: 23px; margin-left: 12px; border: 1px solid #d9d9d9; display: flex; align-items: center; padding: 0 6px 0 8px; }
.find input { flex: 1; }
.find input::placeholder { color: #666; opacity: 1; }

.panes { flex: 1; min-height: 0; display: flex; }
.tree { width: 139px; overflow: hidden; list-style: none; }
.tree.end { display: flex; flex-direction: column; justify-content: flex-end; padding-bottom: 3px; }
.tree li { height: 24px; display: flex; align-items: center; gap: 5px; padding-left: 40px; white-space: nowrap; }
.tree.end li { padding-left: 56px; }
.tree .deep { padding-left: 48px; }
.tree.end .deep { padding-left: 64px; }
.tree .root { padding-left: 32px; }
.selected { background: #d9d9d9; }
.vbar { width: 17px; background: #f0f0f0; display: flex; flex-direction: column; align-items: center; color: #444; }
.thumb { background: #cdcdcd; }
.vbar .thumb { width: 15px; }
.explorer .vbar .before { height: 81px; }
.explorer .vbar .thumb { height: 76px; }
.dialog .vbar .before { height: 110px; }
.dialog .vbar .thumb { height: 85px; }
.list { flex: 1; min-width: 0; position: relative; display: flex; flex-direction: column; justify-content: space-between; margin-left: 5px; }
.sort { position: absolute; left: 133px; top: -5px; color: #777; }
table { table-layout: fixed; border-collapse: collapse; }
th { font-weight: 400; text-align: left; padding: 0 0 5px; color: #4c607a; }
th div { height: 26px; border-right: 1px solid #e5e5e5; padding-left: 6px; display: flex; align-items: center; }
td { padding: 0 0 0 6px; height: 21px; color: #6d6d6d; white-space: nowrap; font-family: "Open Sans", sans-serif; }
.name { padding-left: 4px; color: #111; font-family: "Noto Sans", sans-serif; }
.name svg { display: inline-block; vertical-align: -4px; margin-right: 4px; }
.cn div { padding-left: 3px; }
.explorer table { margin: 0 12px 0 13px; }
.explorer .cd { width: 144px; }
.explorer .ct { width: 120px; }
.explorer .cs { width: 76px; }
.explorer .cs div { margin-right: -3px; }
.num { text-align: right; padding-right: 4px; }
.dialog table { margin-left: 13px; }
.dialog .cd { width: 120px; }
.dialog .ct { width: 72px; }
.dialog .ct div { border: 0; }
.hbar { height: 16px; background: #f0f0f0; display: flex; align-items: center; color: #444; }
.hbar .thumb { height: 16px; }
.explorer .hbar .thumb { flex: 1; margin-right: 2px; }
.dialog .hbar .thumb { width: 331px; }
.status { height: 23px; display: flex; align-items: center; padding: 0 5px 0 14px; color: #1e395b; }
.count { margin-right: 21px; }
.status button { height: 22px; padding: 0 3px; }
.status .on { background: #bfe3f5; border: 1px solid #2f9fd8; padding: 0 2px; }

.dialog { position: absolute; left: 7px; top: 0; width: 626px; height: 473px; background: #f0f0f0; border: 1px solid #3c4a58; display: flex; flex-direction: column; box-shadow: 0 2px 8px rgba(0, 0, 0, .25); }
.title { height: 30px; background: #fff; display: flex; align-items: center; justify-content: space-between; padding: 0 7px 0 8px; }
.dialog .address { height: 35px; background: #fff; padding: 0 11px 0 12px; }
.nav { color: #777; margin-right: 12px; }
.off { color: #d0d0d0; }
.recent { margin: 0 -3px 0 -3px; }
.upb { margin: 0 5px 0 7px; }
.dialog .path { flex: none; width: 292px; }
.docicon { margin-left: 2px; }
.tools { height: 31px; background: #f3f6fa; border-bottom: 1px solid #e3e6ea; display: flex; align-items: center; padding: 0 15px 0 18px; color: #2b3c5a; }
.tools button:first-child { margin-right: 27px; }
.tools .drop { margin: 0 18px 0 5px; }
.tools .prev { margin-right: 20px; }
.dialog .panes { background: #fff; overflow: hidden; }
.choose { padding: 9px 17px 13px 0; font-family: "Open Sans", sans-serif; }
.row { display: flex; align-items: center; justify-content: flex-end; }
.row label { margin-right: 5px; }
.combo { width: 218px; height: 24px; border: 1px solid #1979ca; background: #fff; display: flex; align-items: center; margin-right: 12px; padding: 0 0 0 3px; }
.combo input { flex: 1; height: 20px; }
.beam { width: 1px; height: 16px; background: #000; }
.filter { position: relative; width: 188px; height: 23px; }
.filter select { width: 100%; height: 100%; appearance: none; font: inherit; color: inherit; background: #e3e3e3; border: 1px solid #adadad; border-radius: 0; padding: 0 0 0 3px; }
.filter svg { position: absolute; right: 1px; top: 4px; pointer-events: none; color: #555; }
.combo svg { color: #555; }
.actions { margin-top: 6px; padding-right: 1px; }
.split { display: flex; width: 86px; height: 24px; border: 2px solid #0a72cf; background: #e1e1e1; }
.split button { flex: 1; justify-content: center; }
.split .more { flex: none; width: 13px; border-left: 1px solid #444; margin: 2px 0; color: #000; overflow: hidden; }
.cancel { width: 86px; height: 24px; margin-left: 14px; justify-content: center; border: 1px solid #adadad; background: #e1e1e1; }
.grip { position: absolute; right: 1px; bottom: 0; }

.mark { position: absolute; right: 49px; top: 608px; display: flex; align-items: center; gap: 5px; color: #fff; opacity: .5; font: 300 34px/64px "Roboto", sans-serif; filter: drop-shadow(0 0 2px #555); }
.mark svg { width: 56px; height: 64px; }

.taskbar { height: 40px; background: linear-gradient(90deg, #00161f, #03101c 60%, #040a1c); display: flex; color: #fff; }
.start { width: 48px; justify-content: center; }
.search { width: 288px; background: #f2f2f2; display: flex; align-items: center; padding: 0 12px; color: #222; }
.lens { width: 17px; height: 17px; }
.search input { flex: 1; margin-left: 10px; font: 14px "Open Sans", sans-serif; }
.search input::placeholder { color: #333; opacity: 1; }
.sundae { width: 44px; height: 36px; }
.apps { display: flex; gap: 1px; }
.apps button { width: 48px; height: 40px; justify-content: center; position: relative; }
.apps svg { width: 24px; height: 24px; }
.apps button:first-child { margin-right: 2px; }
.apps button:first-child svg { width: 20px; height: 20px; }
.apps .active { background: #36444c; }
.run::after, .active::after { content: ""; position: absolute; left: 4px; right: 4px; bottom: 0; height: 2px; background: #76b9ed; }
.active::after { left: 0; right: 0; }
.tray { display: flex; align-items: center; gap: 8px; }
.tray time { text-align: center; line-height: 18px; width: 56px; white-space: nowrap; font-family: "Open Sans", sans-serif; }
.notes { margin: 0 20px 0 8px; }
.peek { width: 5px; height: 40px; border-left: 1px solid #5b616b; margin-left: -8px; }
</style>
